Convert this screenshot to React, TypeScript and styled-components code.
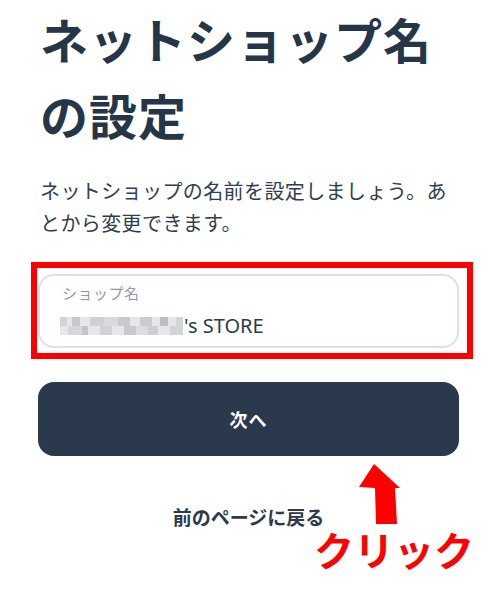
import React from 'react';
import styled, { createGlobalStyle } from 'styled-components';

const GlobalStyle = createGlobalStyle`
  html, body {
    margin: 0;
    padding: 0;
    background: #ffffff;
  }
  body {
    font-family: "Noto Sans", "Noto Sans CJK JP", sans-serif;
    color: #2b3a4d;
  }
`;

const Page = styled.main`
  position: relative;
  width: 500px;
  height: 589px;
  box-sizing: border-box;
  padding: 0 41px 0 38px;
  display: flex;
  flex-direction: column;
  overflow: hidden;
`;

const Title = styled.h1`
  margin: 0;
  padding-left: 2px;
  font-family: "Noto Sans CJK JP", sans-serif;
  font-size: 48px;
  line-height: 76px;
  font-weight: 700;
  color: #253649;
  letter-spacing: 1px;
`;

const Lead = styled.p`
  margin: 23px 0 0;
  padding-left: 2px;
  font-family: "Noto Sans CJK JP", sans-serif;
  font-size: 20px;
  line-height: 32px;
  font-weight: 400;
  color: #2f3e50;
  letter-spacing: 0.4px;
`;

const FieldWrap = styled.div`
  position: relative;
  margin-top: 35px;
`;

const Field = styled.label`
  display: flex;
  flex-direction: column;
  justify-content: center;
  gap: 10px;
  height: 74px;
  box-sizing: border-box;
  padding: 0 22px;
  border: 2px solid #d7e2ee;
  border-radius: 16px;
  background: #fff;
`;

const FieldLabel = styled.span`
  font-family: "Noto Sans CJK JP", sans-serif;
  font-size: 15px;
  line-height: 20px;
  color: #8b9ab0;
  letter-spacing: 0.5px;
`;

const FieldValue = styled.span`
  display: flex;
  align-items: center;
  font-family: "Noto Sans", "Noto Sans CJK JP", sans-serif;
  font-size: 20px;
  line-height: 26px;
  color: #2b3a4d;
`;

// blurred (pixelated) owner name
const Mosaic = styled.span`
  display: inline-block;
  width: 123px;
  height: 18px;
  margin-left: -2px;
  margin-right: 1px;
  background-color: #e6e7ea;
  background-image:
    linear-gradient(90deg, #d2d3d8 0 7px, transparent 7px 12px, #c6c8cd 12px 20px, transparent 20px 30px,
      #cfd0d5 30px 44px, #d9dade 44px 58px, #c8c9ce 58px 70px, transparent 70px 80px, #cbccd1 80px 92px,
      transparent 92px 100px, #bebfc5 100px 108px, transparent 108px 116px, #d4d5d9 116px 123px),
    linear-gradient(90deg, transparent 0 8px, #d6d7db 8px 22px, #c3c4ca 22px 28px, transparent 28px 40px,
      #d0d1d6 40px 52px, transparent 52px 64px, #c9cacf 64px 76px, #dcdde0 76px 88px, #cdced3 88px 98px,
      transparent 98px 110px, #d3d4d8 110px 123px);
  background-size: 123px 9px, 123px 9px;
  background-position: 0 0, 0 9px;
  background-repeat: no-repeat;
`;

const Highlight = styled.div`
  position: absolute;
  left: -7px;
  right: -14px;
  top: -12px;
  bottom: -11px;
  border: 6px solid #ff0000;
  pointer-events: none;
`;

const NextButton = styled.button`
  margin-top: 34px;
  height: 74px;
  border: none;
  border-radius: 16px;
  background: #2a3a4c;
  color: #ffffff;
  font-family: "Noto Sans CJK JP", sans-serif;
  font-size: 18px;
  font-weight: 700;
  letter-spacing: 1px;
  cursor: pointer;
`;

const BackLink = styled.a`
  align-self: center;
  margin-top: 47px;
  font-family: "Noto Sans CJK JP", sans-serif;
  font-size: 19px;
  line-height: 28px;
  font-weight: 700;
  color: #2b3a4d;
  text-decoration: none;
`;

const Arrow = styled.svg`
  position: absolute;
  left: 355px;
  top: 461px;
`;

const ClickNote = styled.span`
  position: absolute;
  left: 314px;
  top: 522px;
  font-family: "Noto Sans CJK JP", sans-serif;
  font-size: 40px;
  line-height: 54px;
  font-weight: 700;
  color: #ff0000;
  letter-spacing: 0;
`;

export default function App() {
  return (
    <>
      <GlobalStyle />
      <Page>
        <Title>
          ネットショップ名
          <br />
          の設定
        </Title>
        <Lead>ネットショップの名前を設定しましょう。あとから変更できます。</Lead>
        <FieldWrap>
          <Field>
            <FieldLabel>ショップ名</FieldLabel>
            <FieldValue>
              <Mosaic />
              's STORE
            </FieldValue>
          </Field>
          <Highlight />
        </FieldWrap>
        <NextButton>次へ</NextButton>
        <BackLink href="#">前のページに戻る</BackLink>
        <Arrow width="50" height="66" viewBox="0 0 50 66">
          <polygon points="19,3 45,27 40,27 42,63 21,63 20,27 4,26" fill="#ff0000" />
        </Arrow>
        <ClickNote>クリック</ClickNote>
      </Page>
    </>
  );
}
